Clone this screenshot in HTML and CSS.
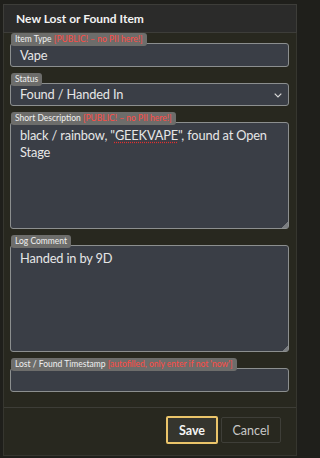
FILE: index.html
```html
<!DOCTYPE html>
<html>
<head>
<meta charset="utf-8">
<link rel="stylesheet" href="styles.css">
</head>
<body>
<div class="modal">
  <div class="header">New Lost or Found Item</div>
  <div class="body">
    <div class="group">
      <div class="tab">Item Type <span class="warn">[PUBLIC! – no PII here!]</span></div>
      <div class="field input">Vape</div>
    </div>
    <div class="group">
      <div class="tab">Status</div>
      <div class="field select">Found / Handed In
        <svg class="chev" width="8" height="5" viewBox="0 0 8 5"><path d="M0.7 0.7 L4 4 L7.3 0.7" fill="none" stroke="#d8d8d8" stroke-width="1.2"/></svg>
      </div>
    </div>
    <div class="group">
      <div class="tab">Short Description <span class="warn">[PUBLIC! – no PII here!]</span></div>
      <div class="field area">black / rainbow, "<span class="spell">GEEKVAPE</span>", found at Open Stage<span class="grip"></span></div>
    </div>
    <div class="group">
      <div class="tab">Log Comment</div>
      <div class="field area">Handed in by 9D<span class="grip"></span></div>
    </div>
    <div class="group">
      <div class="tab">Lost / Found Timestamp <span class="warn">[autofilled, only enter if not 'now']</span></div>
      <div class="field input"></div>
    </div>
  </div>
  <div class="footer">
    <button class="btn save">Save</button>
    <button class="btn cancel">Cancel</button>
  </div>
</div>
</body>
</html>
```
FILE: styles.css
```css
html, body {
  margin: 0;
  padding: 0;
  background: #1f1f1b;
  width: 300px;
  height: 458px;
  overflow: hidden;
  font-family: Lato, "Noto Sans", sans-serif;
}
.modal {
  margin: 4px 3px 0 3px;
  height: 452px;
  background: #28281f;
  border-left: 1px solid #36362f;
  border-right: 1px solid #36362f;
  border-bottom: 1px solid #36362f;
  box-sizing: border-box;
  display: flex;
  flex-direction: column;
}
.header {
  height: 29px;
  box-sizing: border-box;
  background: #2b2b2a;
  border: 1px solid #3d3d39;
  margin: 0 -1px;
  padding-left: 12px;
  display: flex;
  align-items: center;
  color: #f2f2f2;
  font-weight: 700;
  font-size: 12px;
}
.body {
  padding: 0 7px 0 6px;
  display: flex;
  flex-direction: column;
  gap: 6px;
}
.group {
  display: flex;
  flex-direction: column;
  align-items: flex-start;
}
.tab {
  position: relative;
  z-index: 1;
  background: #6d6d6b;
  color: #f0f0f0;
  font-size: 8.5px;
  height: 13px;
  line-height: 12px;
  padding: 0 4px 0 4px;
  border-radius: 3px;
  margin-bottom: -3px;
  margin-left: 1px;
  white-space: nowrap;
  box-sizing: border-box;
}
.warn { color: #ff4b45; }
.field {
  align-self: stretch;
  position: relative;
  box-sizing: border-box;
  background: #3a3e46;
  border: 1px solid #8c8f8f;
  border-radius: 3px;
  color: #e6e6e6;
  font-size: 12.8px;
  letter-spacing: -0.15px;
  padding-left: 9px;
}
.input {
  height: 24px;
  line-height: 22px;
}
.select {
  height: 23px;
  line-height: 21px;
}
.chev {
  position: absolute;
  right: 6px;
  top: 9px;
}
.area {
  height: 107px;
  padding-top: 4px;
  padding-right: 4px;
  line-height: 17px;
}
.spell {
  text-decoration: underline dotted #e03030;
  text-underline-offset: 2px;
}
.grip {
  position: absolute;
  right: 0;
  bottom: 0;
  width: 6px;
  height: 6px;
  background: linear-gradient(135deg, transparent 50%, #7a7d80 50%);
}
.footer {
  margin-top: 15px;
  border-top: 1px solid #3d3d37;
  padding: 8px 15px 0 0;
  display: flex;
  justify-content: flex-end;
  align-items: center;
  gap: 3px;
}
.btn {
  font-family: Lato, "Noto Sans", sans-serif;
  font-size: 12.5px;
  cursor: pointer;
  border-radius: 2px;
  padding: 0;
}
.save {
  width: 52px;
  height: 28px;
  background: #35352e;
  border: 2px solid #eac46a;
  color: #f4f4f4;
  font-weight: 700;
}
.cancel {
  width: 60px;
  height: 26px;
  background: #28281f;
  border: 1px solid #3e3e38;
  color: #c8c8c8;
}
```
